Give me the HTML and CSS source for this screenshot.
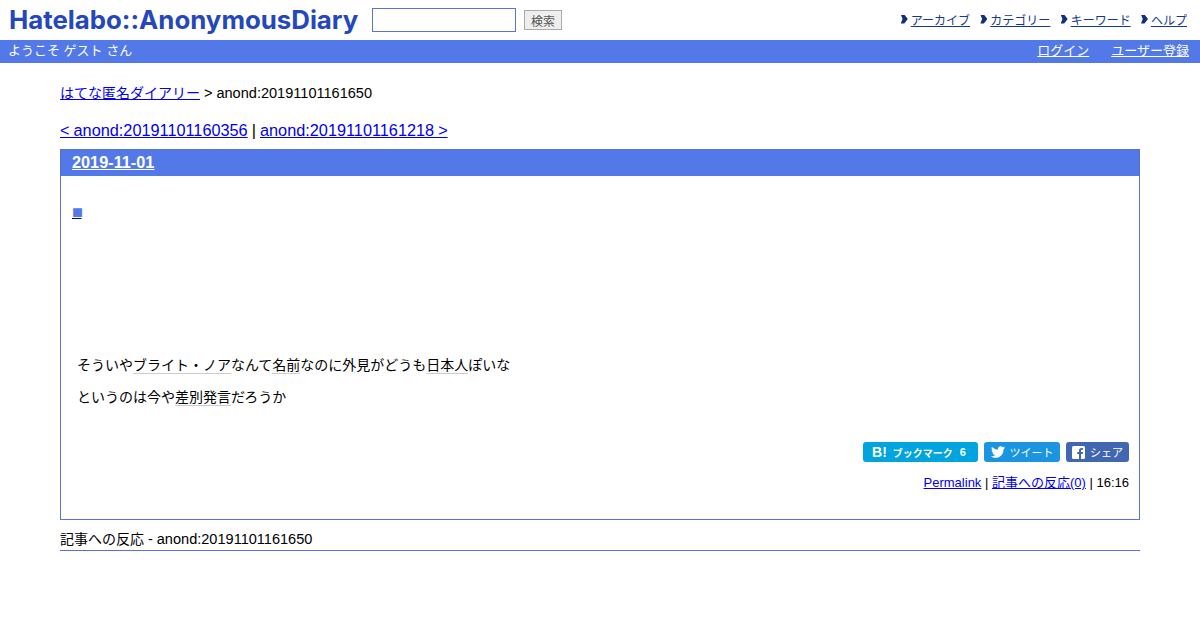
FILE: index.html
```html
<!DOCTYPE html>
<html lang="ja">

<head>
    <meta charset="UTF-8">
    <meta name="viewport" content="width=device-width, initial-scale=1.0">
    <title>anond:20191101161650</title>
    <link rel="stylesheet" href="styles.css">
</head>

<body>

    <div class="top-bar">
        <a href="#" class="logo">Hatelabo::AnonymousDiary</a>
        <form class="search">
            <input type="text" class="search-input">
            <button type="button" class="search-button">検索</button>
        </form>
        <ul class="top-nav">
            <li><a href="#">アーカイブ</a></li>
            <li><a href="#">カテゴリー</a></li>
            <li><a href="#">キーワード</a></li>
            <li><a href="#">ヘルプ</a></li>
        </ul>
    </div>

    <div class="user-bar">
        <span>ようこそ ゲスト さん</span>
        <div class="user-links">
            <a href="#">ログイン</a>
            <a href="#">ユーザー登録</a>
        </div>
    </div>

    <div class="main">
        <p class="crumb"><a href="#">はてな匿名ダイアリー</a> <span class="latin">&gt; anond:20191101161650</span></p>
        <p class="pager"><a href="#">&lt; anond:20191101160356</a> | <a href="#">anond:20191101161218 &gt;</a></p>

        <div class="day">
            <h2 class="day-title"><a href="#">2019-11-01</a></h2>
            <div class="day-body">
                <h3 class="entry-mark"><a href="#"><span class="sanchor">■</span></a></h3>
                <div class="entry-text">
                    <p>そういや<a href="#" class="keyword">ブライト・ノア</a>なんて<a href="#" class="keyword">名前</a>なのに外見がどうも<a href="#" class="keyword">日本人</a>ぽいな</p>
                    <p>というのは今や<a href="#" class="keyword">差別発言</a>だろうか</p>
                </div>
                <div class="share">
                    <a href="#" class="share-btn share-hatena"><b class="share-b">B!</b><b class="share-label">ブックマーク</b><b class="share-count">6</b></a>
                    <a href="#" class="share-btn share-twitter">
                        <svg width="14" height="12" viewBox="0 0 24 20"><path fill="#fff" d="M24 2.4c-.9.4-1.800.7-2.800.8 1-.6 1.800-1.600 2.200-2.700-1 .6-2 1-3.100 1.200C19.300.7 18 0 16.600 0c-2.700 0-4.900 2.200-4.900 4.900 0 .4 0 .8.100 1.100C7.700 5.800 4.100 3.900 1.700.9 1.300 1.600 1 2.500 1 3.400c0 1.700.9 3.200 2.200 4.100-.8 0-1.600-.2-2.200-.6v.1c0 2.400 1.700 4.400 3.900 4.800-.4.100-.8.200-1.300.2-.3 0-.6 0-.9-.1.600 2 2.400 3.400 4.600 3.400-1.700 1.300-3.800 2.100-6.100 2.100-.4 0-.8 0-1.200-.1C2.200 19.200 4.800 20 7.500 20c9.100 0 14-7.500 14-14v-.6c1-.7 1.800-1.600 2.500-3z"/></svg>
                        ツイート
                    </a>
                    <a href="#" class="share-btn share-facebook">
                        <svg width="13" height="13" viewBox="0 0 13 13"><rect width="13" height="13" rx="1.500" fill="#fff"/><path fill="#4267b2" d="M9 13V8h1.700l.3-2H9V4.800c0-.6.200-1 1-1h1V2.100C10.800 2 10.200 2 9.600 2 8 2 7 3 7 4.600V6H5.300v2H7v5z"/></svg>
                        シェア
                    </a>
                </div>
                <p class="entry-footer"><a href="#">Permalink</a> | <a href="#">記事への反応(0)</a> | 16:16</p>
            </div>
        </div>

        <h3 class="refs-title">記事への反応 <span class="latin">- anond:20191101161650</span></h3>
    </div>

</body>

</html>
```

FILE: styles.css
```css
* {
    margin: 0;
    padding: 0;
    box-sizing: border-box;
}

body {
    font-family: "Liberation Sans", Arial, "Noto Sans CJK JP", sans-serif;
    font-size: 14px;
    background-color: #ffffff;
    color: #000000;
}

a {
    color: #0000ee;
}

.latin {
    font-size: 14.560px;
}

.top-bar {
    display: flex;
    align-items: center;
    height: 40px;
    padding: 0 13px 0 9px;
}

.logo {
    width: 350px;
    font-family: Inter, sans-serif;
    font-size: 25.800px;
    font-weight: 700;
    line-height: 40px;
    color: #2448bc;
    text-decoration: none;
    white-space: nowrap;
}

.search {
    display: flex;
    align-items: center;
    gap: 8px;
    margin-left: 13px;
}

.search-input {
    width: 144px;
    height: 24px;
    border: 1px solid #5a75c8;
    background-color: #ffffff;
}

.search-button {
    width: 38px;
    height: 20px;
    border: 1px solid #aaaaaa;
    background-color: #eeeeee;
    color: #555555;
    font-family: inherit;
    font-size: 12px;
}

.top-nav {
    display: flex;
    gap: 10.300px;
    margin-left: auto;
    margin-top: -2px;
    list-style: none;
    font-size: 12px;
}

.top-nav li {
    display: flex;
    align-items: center;
    gap: 3px;
}

.top-nav li::before {
    content: "";
    width: 7px;
    height: 9px;
    background-color: #0f2f78;
    clip-path: polygon(0 0, 50% 0, 100% 50%, 50% 100%, 0 100%, 25% 50%);
}

.top-nav a {
    color: #123a8c;
}

.user-bar {
    display: flex;
    justify-content: space-between;
    align-items: flex-start;
    height: 23px;
    padding: 1px 11px 0 8px;
    background-color: #5279e7;
    color: #ffffff;
    font-size: 13px;
    line-height: 19px;
}

.user-links {
    display: flex;
    gap: 22px;
}

.user-links a {
    color: #ffffff;
}

.main {
    margin: 0 60px;
}

.crumb {
    margin-top: 22px;
    line-height: 16px;
}

.pager {
    margin-top: 19px;
    font-size: 16.300px;
    line-height: 20px;
    word-spacing: -0.500px;
}

.day {
    margin-top: 9px;
    height: 371px;
    border: 1px solid #5a75c8;
}

.day-title {
    height: 26px;
    padding-left: 11px;
    background-color: #5279e7;
    font-size: 16.300px;
    line-height: 24px;
}

.day-title a {
    color: #ffffff;
}

.day-body {
    padding: 0 10px 0 11px;
}

.entry-mark {
    margin-top: 28px;
    font-family: "Noto Sans CJK JP", sans-serif;
    font-size: 11px;
    font-weight: normal;
    line-height: 16px;
    letter-spacing: -1.500px;
}

.entry-mark a {
    color: #00008b;
}

.sanchor {
    color: #5279e7;
}

.entry-text {
    margin-top: 135px;
    padding-left: 5px;
    line-height: 20px;
}

.entry-text p {
    margin-bottom: 12px;
}

.keyword {
    color: #000000;
    text-decoration: none;
    border-bottom: 1px solid #cccccc;
}

.share {
    display: flex;
    justify-content: flex-end;
    gap: 6px;
    margin-top: 35px;
}

.share-btn {
    display: flex;
    align-items: center;
    justify-content: center;
    gap: 5px;
    height: 20px;
    border-radius: 3px;
    color: #ffffff;
    font-size: 11px;
    text-decoration: none;
}

.share-hatena {
    width: 115px;
    background-color: #00a4de;
    gap: 0;
}

.share-b {
    margin-right: 6px;
    font-size: 14px;
}

.share-label {
    font-size: 10px;
}

.share-count {
    margin-left: 7px;
    margin-right: 3px;
}

.share-twitter {
    width: 76px;
    background-color: #1b95e0;
}

.share-facebook {
    width: 63px;
    background-color: #4267b2;
}

.entry-footer {
    margin-top: 13px;
    font-size: 13px;
    line-height: 16px;
    text-align: right;
}

.refs-title {
    margin-top: 9px;
    height: 22px;
    border-bottom: 1px solid #5a75c8;
    font-size: 14px;
    font-weight: normal;
    line-height: 20px;
}
```
